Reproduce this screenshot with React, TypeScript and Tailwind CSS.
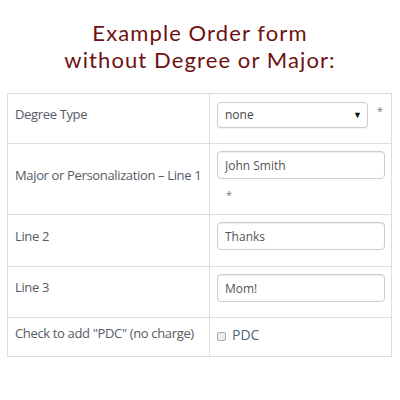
import React from 'react';

const labelCls = "whitespace-nowrap pl-[7px] pr-0 text-[13px] tracking-[-0.35px] text-[#555b66] align-middle";
const inputCls =
  "h-[28px] w-[168px] rounded-[4px] border border-[#cccccc] bg-white pl-[7px] text-[12px] text-[#555555] shadow-[inset_0_1px_1px_rgba(0,0,0,0.075)] outline-none";

export default function App() {
  return (
    <div className="h-[400px] w-[400px] bg-white" style={{ fontFamily: '"Open Sans", "Noto Sans", sans-serif' }}>
      <h1
        className="pt-[19px] text-center text-[22px] leading-[27px] tracking-[1.1px] text-[#6e1111]"
        style={{ fontFamily: 'Lato, "Open Sans", sans-serif' }}
      >
        Example Order form
        <br />
        without Degree or Major:
      </h1>
      <table className="mt-[20px] ml-[7px] w-[385px] table-fixed border-collapse border border-[#dddddd]">
        <tbody>
          <tr className="h-[50px] border-b border-[#dddddd]">
            <td className={`${labelCls} w-[202px] border-r border-[#dddddd] pb-[7px]`}>Degree Type</td>
            <td className="pl-[7px] pt-[8px] pb-[15px] align-top">
              <div className="flex items-start">
                <div className="relative flex h-[26px] w-[151px] items-center rounded-[4px] border border-[#cccccc] bg-white pl-[7px] text-[12px] text-[#444444] shadow-[0_1px_1px_rgba(0,0,0,0.06)]">
                  none
                  <span className="absolute right-[5px] top-[5px] text-[9px] text-[#111111]">▼</span>
                </div>
                <span className="ml-[9px] mt-[1px] text-[11px] text-[#777777]">*</span>
              </div>
            </td>
          </tr>
          <tr className="h-[71px] border-b border-[#dddddd]">
            <td className={`${labelCls} border-r border-[#dddddd] pb-[6px]`}>Major or Personalization – Line 1</td>
            <td className="pl-[7px] pt-[7px] align-top">
              <input className={inputCls} defaultValue="John Smith" readOnly />
              <div className="ml-[9px] mt-[8px] h-[20px] text-[11px] text-[#777777]">*</div>
            </td>
          </tr>
          <tr className="h-[52px] border-b border-[#dddddd]">
            <td className={`${labelCls} border-r border-[#dddddd] pb-[8px]`}>Line 2</td>
            <td className="pl-[7px] pt-[7px] pb-[15px] align-top">
              <input className={inputCls} defaultValue="Thanks" readOnly />
            </td>
          </tr>
          <tr className="h-[51px] border-b border-[#dddddd]">
            <td className={`${labelCls} border-r border-[#dddddd] pb-[8px]`}>Line 3</td>
            <td className="pl-[7px] pt-[7px] pb-[15px] align-top">
              <input className={inputCls} defaultValue="Mom!" readOnly />
            </td>
          </tr>
          <tr className="h-[39px]">
            <td className={`${labelCls} border-r border-[#dddddd] pb-[6px]`}>Check to add "PDC" (no charge)</td>
            <td className="pl-[7px] pb-[6px] align-middle">
              <label className="flex items-center">
                <span className="mt-[4px] h-[9px] w-[9px] rounded-[2px] border border-[#aaaaaa] bg-[#eeeeee]" />
                <span className="ml-[6px] text-[14px] text-[#4f6680]">PDC</span>
              </label>
            </td>
          </tr>
        </tbody>
      </table>
    </div>
  );
}
